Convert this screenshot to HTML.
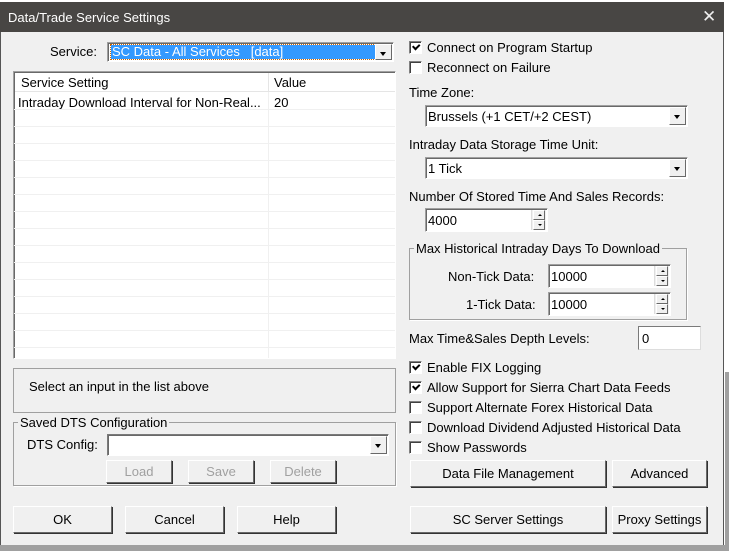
<!DOCTYPE html>
<html><head><style>
*{box-sizing:border-box;margin:0;padding:0}
body{width:729px;height:551px;background:#fff;position:relative;overflow:hidden;font-family:"Liberation Sans",sans-serif;font-size:13px;color:#000}
.a{position:absolute;white-space:nowrap}
#dlg{position:absolute;left:0;top:2px;width:724px;height:543px;background:#f0f0f0;border-right:1px solid #555;border-left:1px solid #555}
#tb{position:absolute;left:0;top:2px;width:724px;height:30px;background:#484644;color:#fff;font-size:13px}
.sunk{position:absolute;background:#fff;border:1px solid;border-color:#a0a0a0 #fff #fff #a0a0a0;box-shadow:inset 1px 1px 0 #696969}
.dd{position:absolute;right:1px;top:1px;bottom:1px;width:17px;background:#f0f0f0;border:1px solid;border-color:#fff #696969 #696969 #fff}
.dd:after{content:"";position:absolute;left:4px;top:7px;border:3.5px solid transparent;border-top:4px solid #000;border-bottom:0}
.btn{position:absolute;background:#f0f0f0;border:1px solid;border-color:#fff #696969 #696969 #fff;box-shadow:1px 1px 0 #333;text-align:center}
.dis{color:#a0a0a0}
.cb{position:absolute;width:13px;height:13px;background:#fff;border:1px solid;border-color:#808080 #fff #fff #808080;box-shadow:inset 1px 1px 0 #404040}
.cb.on:after{content:"";position:absolute;left:2px;top:1px;width:5px;height:3px;border-left:2px solid #000;border-bottom:2px solid #000;transform:rotate(-45deg) translate(0px,1px)}
.grp{position:absolute;border:1px solid #a0a0a0;box-shadow:1px 1px 0 #fff}
.grp span{position:absolute;top:-8px;left:4px;background:#f0f0f0;padding:0 2px}
.spin{position:absolute;right:1px;top:1px;bottom:1px;width:15px;background:#f0f0f0;border-left:1px solid #ddd}
.spin i{position:absolute;left:1px;right:1px;height:50%;border:1px solid;border-color:#fff #696969 #696969 #fff}
.spin i:first-child{top:0}.spin i:last-child{bottom:0}
.spin i:after{content:"";position:absolute;left:4px;top:3px;border:2px solid transparent}
.spin i:first-child:after{border-bottom:2px solid #000;border-top:0}
.spin i:last-child:after{border-top:2px solid #000;border-bottom:0}
.row{position:absolute;left:0;right:0;height:1px;background:#f0f0f0}
</style></head><body>
<div id="dlg"></div>
<div id="tb"><div class="a" style="left:8px;top:8px">Data/Trade Service Settings</div><div class="a" style="left:702px;top:5px;font-size:17px;font-weight:300;color:#eee">✕</div></div>

<div class="a" style="left:50px;top:44px">Service:</div>
<div class="sunk" style="left:107px;top:42px;width:287px;height:20px">
<div class="a" style="left:3px;top:2px;width:264px;height:14px;background:#3399ff;color:#fff;outline:1px dotted #c60;padding-left:1px;line-height:14px">SC Data - All Services &nbsp;&nbsp;[data]</div><div class="dd"></div></div>

<div class="sunk" style="left:13px;top:71px;width:383px;height:288px;overflow:hidden">
<div class="a" style="left:1px;top:1px;width:380px;height:19px;border-bottom:1px solid #e5e5e5"></div>
<div class="a" style="left:254px;top:1px;width:1px;height:19px;background:#e5e5e5"></div>
<div class="a" style="left:7px;top:3px">Service Setting</div>
<div class="a" style="left:260px;top:3px">Value</div>
<div class="a" style="left:254px;top:20px;width:1px;height:270px;background:#f0f0f0"></div>
<div class="a" style="left:4px;top:23px">Intraday Download Interval for Non-Real...</div>
<div class="a" style="left:260px;top:23px">20</div>
<div class="row" style="top:37px"></div><div class="row" style="top:54px"></div><div class="row" style="top:71px"></div><div class="row" style="top:88px"></div><div class="row" style="top:105px"></div><div class="row" style="top:122px"></div><div class="row" style="top:139px"></div><div class="row" style="top:156px"></div><div class="row" style="top:173px"></div><div class="row" style="top:190px"></div><div class="row" style="top:207px"></div><div class="row" style="top:224px"></div><div class="row" style="top:241px"></div><div class="row" style="top:258px"></div><div class="row" style="top:275px"></div>
</div>

<div class="a" style="left:13px;top:368px;width:383px;height:45px;border:1px solid #a0a0a0"></div>
<div class="a" style="left:29px;top:379px">Select an input in the list above</div>

<div class="grp" style="left:13px;top:422px;width:383px;height:64px"><span>Saved DTS Configuration</span></div>
<div class="a" style="left:27px;top:437px">DTS Config:</div>
<div class="sunk" style="left:107px;top:434px;width:282px;height:22px;border-color:#7a7a7a #fff #fff #7a7a7a"><div class="dd"></div></div>
<div class="btn dis" style="left:106px;top:460px;width:66px;height:23px;line-height:21px">Load</div>
<div class="btn dis" style="left:188px;top:460px;width:66px;height:23px;line-height:21px">Save</div>
<div class="btn dis" style="left:270px;top:460px;width:66px;height:23px;line-height:21px">Delete</div>

<div class="btn" style="left:13px;top:506px;width:99px;height:27px;line-height:25px">OK</div>
<div class="btn" style="left:125px;top:506px;width:99px;height:27px;line-height:25px">Cancel</div>
<div class="btn" style="left:237px;top:506px;width:99px;height:27px;line-height:25px">Help</div>

<div class="cb on" style="left:409px;top:41px"></div><div class="a" style="left:427px;top:40px">Connect on Program Startup</div>
<div class="cb" style="left:409px;top:61px"></div><div class="a" style="left:427px;top:60px">Reconnect on Failure</div>
<div class="a" style="left:409px;top:85px">Time Zone:</div>
<div class="sunk" style="left:425px;top:105px;width:263px;height:22px"><div class="a" style="left:2px;top:3px">Brussels (+1 CET/+2 CEST)</div><div class="dd"></div></div>
<div class="a" style="left:409px;top:137px">Intraday Data Storage Time Unit:</div>
<div class="sunk" style="left:425px;top:157px;width:263px;height:22px"><div class="a" style="left:2px;top:3px">1 Tick</div><div class="dd"></div></div>
<div class="a" style="left:409px;top:189px">Number Of Stored Time And Sales Records:</div>
<div class="sunk" style="left:425px;top:208px;width:123px;height:24px"><div class="a" style="left:2px;top:4px">4000</div><div class="spin"><i></i><i></i></div></div>

<div class="grp" style="left:409px;top:248px;width:278px;height:72px"><span>Max Historical Intraday Days To Download</span></div>
<div class="a" style="left:448px;top:269px">Non-Tick Data:</div>
<div class="sunk" style="left:548px;top:264px;width:123px;height:24px"><div class="a" style="left:2px;top:4px">10000</div><div class="spin"><i></i><i></i></div></div>
<div class="a" style="left:466px;top:297px">1-Tick Data:</div>
<div class="sunk" style="left:548px;top:292px;width:123px;height:24px"><div class="a" style="left:2px;top:4px">10000</div><div class="spin"><i></i><i></i></div></div>

<div class="a" style="left:409px;top:331px">Max Time&amp;Sales Depth Levels:</div>
<div class="sunk" style="left:638px;top:326px;width:63px;height:24px;box-shadow:none;border-color:#7a7a7a #ddd #ddd #7a7a7a"><div class="a" style="left:3px;top:4px">0</div></div>

<div class="cb on" style="left:409px;top:361px"></div><div class="a" style="left:427px;top:360px">Enable FIX Logging</div>
<div class="cb on" style="left:409px;top:381px"></div><div class="a" style="left:427px;top:380px">Allow Support for Sierra Chart Data Feeds</div>
<div class="cb" style="left:409px;top:401px"></div><div class="a" style="left:427px;top:400px">Support Alternate Forex Historical Data</div>
<div class="cb" style="left:409px;top:421px"></div><div class="a" style="left:427px;top:420px">Download Dividend Adjusted Historical Data</div>
<div class="cb" style="left:409px;top:441px"></div><div class="a" style="left:427px;top:440px">Show Passwords</div>

<div class="btn" style="left:410px;top:460px;width:196px;height:27px;line-height:25px">Data File Management</div>
<div class="btn" style="left:612px;top:460px;width:95px;height:27px;line-height:25px">Advanced</div>
<div class="btn" style="left:410px;top:506px;width:196px;height:27px;line-height:25px">SC Server Settings</div>
<div class="btn" style="left:612px;top:506px;width:95px;height:27px;line-height:25px">Proxy Settings</div>

<div class="a" style="left:0;top:545px;width:729px;height:6px;background:#a0a0a0"></div>
<div class="a" style="left:725px;top:372px;width:4px;height:173px;background:#a0a0a0"></div>
</body></html>
